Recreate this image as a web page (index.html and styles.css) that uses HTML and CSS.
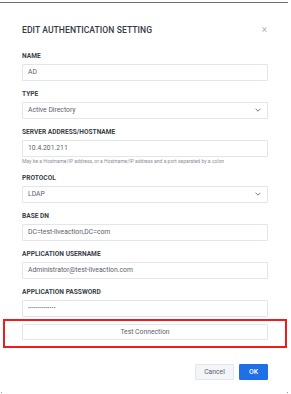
FILE: index.html
```html
<!DOCTYPE html>
<html lang="en">
<head>
    <meta charset="UTF-8">
    <meta name="viewport" content="width=device-width, initial-scale=1.0">
    <title>Edit Authentication Setting</title>
    <link rel="stylesheet" href="styles.css">
</head>
<body>
    <div class="topline"></div>
    <div class="modal">
        <div class="modal-header">
            <span class="modal-title">EDIT AUTHENTICATION SETTING</span>
            <span class="close">&times;</span>
        </div>

        <div class="field">
            <label class="label">NAME</label>
            <div class="input">AD</div>
        </div>

        <div class="field">
            <label class="label">TYPE</label>
            <div class="input select">
                Active Directory
                <svg class="chevron" viewBox="0 0 10 6" width="6" height="4"><path d="M1 1l4 4 4-4" fill="none" stroke="#6b7280" stroke-width="1.6"/></svg>
            </div>
        </div>

        <div class="field">
            <label class="label">SERVER ADDRESS/HOSTNAME</label>
            <div class="input">10.4.201.211</div>
            <div class="help">May be a Hostname/IP address, or a Hostname/IP address and a port separated by a colon</div>
        </div>

        <div class="field">
            <label class="label">PROTOCOL</label>
            <div class="input select">
                LDAP
                <svg class="chevron" viewBox="0 0 10 6" width="6" height="4"><path d="M1 1l4 4 4-4" fill="none" stroke="#6b7280" stroke-width="1.6"/></svg>
            </div>
        </div>

        <div class="field">
            <label class="label">BASE DN</label>
            <div class="input">DC=test-liveaction,DC=com</div>
        </div>

        <div class="field">
            <label class="label">APPLICATION USERNAME</label>
            <div class="input">Administrator@test-liveaction.com</div>
        </div>

        <div class="field last">
            <label class="label">APPLICATION PASSWORD</label>
            <div class="input password">••••••••••••••</div>
        </div>

        <div class="highlight">
            <button class="btn-test">Test Connection</button>
        </div>

        <div class="actions">
            <button class="btn btn-cancel">Cancel</button>
            <button class="btn btn-ok">OK</button>
        </div>
    </div>
    <div class="corners"><span></span><span></span></div>
</body>
</html>
```

FILE: styles.css
```css
html, body
{
    margin: 0;
    padding: 0;
    background: #ffffff;
    font-family: Roboto, "Liberation Sans", sans-serif;
    color: #3a3f4a;
}

.topline
{
    margin-top: 2px;
    width: 288px;
    height: 1px;
    background: #6f6f6f;
}

.modal
{
    padding: 0 23px 0 22px;
}

.modal-header
{
    display: flex;
    justify-content: space-between;
    align-items: center;
    margin-top: 21px;
    height: 12px;
    margin-bottom: 15px;
}

.modal-title
{
    font-size: 8.6px;
    font-weight: 500;
    color: #353a44;
    letter-spacing: 0.05px;
}

.close
{
    font-size: 10px;
    line-height: 12px;
    color: #b0b3ba;
    margin-right: 1px;
}

.field
{
    margin-bottom: 8.5px;
}

.field.last
{
    margin-bottom: 2px;
}

.label
{
    display: block;
    font-size: 6.6px;
    font-weight: 700;
    line-height: 10px;
    margin-bottom: 2.5px;
    color: #3a3f4a;
}

.input
{
    box-sizing: border-box;
    height: 17px;
    border: 1px solid #e2e5ea;
    border-radius: 1px;
    padding: 0 5px;
    font-size: 6.8px;
    line-height: 15px;
    color: #5b606c;
}

.select
{
    display: flex;
    justify-content: space-between;
    align-items: center;
}

.chevron
{
    margin-right: 1px;
}

.password
{
    font-size: 5px;
    letter-spacing: 0.3px;
    color: #4b5060;
}

.help
{
    font-size: 5px;
    line-height: 7px;
    margin-top: 1px;
    color: #8a8f99;
}

.highlight
{
    margin: 0 -19px;
    padding: 3px 17px 6px 17px;
    border: 2px solid #ee1c1c;
}

.btn-test
{
    display: block;
    box-sizing: border-box;
    width: 100%;
    height: 16px;
    background: #ffffff;
    border: 1px solid #e2e5ea;
    border-radius: 1px;
    font-family: Roboto, "Liberation Sans", sans-serif;
    font-size: 6.8px;
    color: #5b606c;
    padding: 0;
}

.actions
{
    display: flex;
    justify-content: flex-end;
    gap: 5px;
    margin-top: 16px;
}

.btn
{
    box-sizing: border-box;
    height: 16px;
    border-radius: 1px;
    font-family: Roboto, "Liberation Sans", sans-serif;
    font-size: 6.8px;
    padding: 0;
}

.btn-cancel
{
    width: 39px;
    background: #f3f5f8;
    border: 1px solid #e2e5ea;
    color: #5b606c;
}

.btn-ok
{
    width: 29px;
    background: #1f6fe6;
    border: 1px solid #1f6fe6;
    color: #ffffff;
    font-weight: 500;
}

.corners
{
    display: flex;
    justify-content: space-between;
    width: 287px;
    margin-top: 12px;
    padding-left: 1px;
}

.corners span
{
    width: 1px;
    height: 1px;
    background: #9a9a9a;
}
```
